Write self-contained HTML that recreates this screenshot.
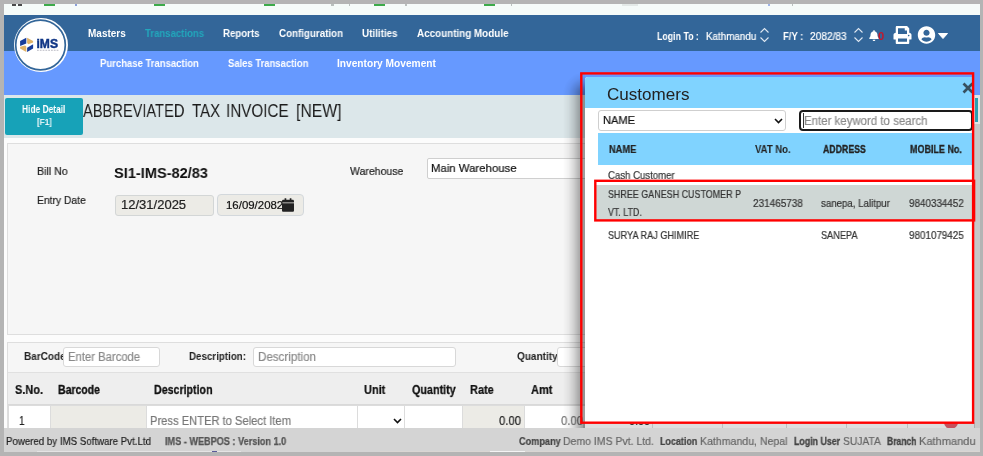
<!DOCTYPE html>
<html><head><meta charset="utf-8">
<style>
*{box-sizing:border-box;margin:0;padding:0}
html,body{width:983px;height:456px;overflow:hidden}
body{background:#b4b4b4;font-family:"Liberation Sans",sans-serif;position:relative;color:#222}
.a{position:absolute;white-space:nowrap}
.t{position:absolute;white-space:nowrap;line-height:1;transform-origin:0 0;will-change:transform}
svg{will-change:transform}
.cell{position:absolute;top:405px;height:24px;border:1px solid #dcdcdc;background:#fff}
</style></head><body>
<!-- page area -->
<div class="a" style="left:4px;top:4px;width:976px;height:448px;background:#fcfcfc"></div>
<!-- browser tab strip -->
<div class="a" style="left:4px;top:4px;width:976px;height:11px;background:#f5fbf9"></div>
<div class="a" style="left:44px;top:4px;width:11px;height:2px;background:#3cab4a"></div>
<div class="a" style="left:154px;top:4px;width:11px;height:2px;background:#3cab4a"></div>
<div class="a" style="left:264px;top:4px;width:11px;height:2px;background:#3cab4a"></div>
<div class="a" style="left:374px;top:4px;width:11px;height:2px;background:#3cab4a"></div>
<div class="a" style="left:484px;top:4px;width:11px;height:2px;background:#3cab4a"></div>
<div class="a" style="left:12px;top:4px;width:4px;height:2px;background:#4a4a4a"></div><div class="a" style="left:18px;top:4px;width:4px;height:2px;background:#4a4a4a"></div>
<div class="a" style="left:75px;top:4px;width:2px;height:2px;background:#8aa0d8"></div>
<div class="a" style="left:331px;top:4px;width:3px;height:2px;background:#b9bfbd"></div>
<div class="a" style="left:349px;top:4px;width:1px;height:2px;background:#b9bfbd"></div>
<div class="a" style="left:405px;top:4px;width:2px;height:2px;background:#b9bfbd"></div>
<div class="a" style="left:511px;top:4px;width:1px;height:2px;background:#b9bfbd"></div>
<div class="a" style="left:622px;top:4px;width:16px;height:2px;background:#e3e9e7"></div>
<div class="a" style="left:768px;top:4px;width:2px;height:2px;background:#9db4e6"></div>
<div class="a" style="left:792px;top:4px;width:1px;height:2px;background:#b9bfbd"></div>
<!-- nav bars -->
<div class="a" style="left:4px;top:15px;width:976px;height:36px;background:#336699"></div>
<div class="a" style="left:4px;top:51px;width:976px;height:44px;background:#6699ff"></div>
<!-- logo -->
<div class="a" style="left:13.5px;top:18px;width:54px;height:54px;border-radius:50%;background:#fff"></div>
<svg class="a" style="left:13px;top:17px" width="56" height="56" viewBox="0 0 56 56"><circle cx="27.5" cy="28" r="24.800" fill="none" stroke="#336699" stroke-width="1.700"/></svg>
<svg class="a" style="left:19px;top:36px" width="44" height="18" viewBox="0 0 44 18">
  <polygon points="1.1,5.1 7.3,1.700 7.3,7.4 1.1,10" fill="#173c9a"/>
  <polygon points="8.1,1.700 14.1,5.1 14.1,6.500 9.3,8.300 8.1,7.1" fill="#e0b266"/>
  <polygon points="8.1,11.700 14.1,8.300 14.1,12.500 8.1,16" fill="#173c9a"/>
  <polygon points="1.1,10.800 6.1,9.400 7.3,10.500 7.3,16 1.1,12.500" fill="#e0b266"/>
  <text x="17.500" y="11.700" font-family="Liberation Sans" font-weight="bold" font-size="12" fill="#0f3585" stroke="#0f3585" stroke-width="0.450" textLength="21.500" lengthAdjust="spacingAndGlyphs">iMS</text>
  <line x1="18" y1="14.300" x2="39.500" y2="14.300" stroke="#b9b9c2" stroke-width="1.100" stroke-dasharray="1.800 1"/>
</svg>
<!-- nav right icons -->
<svg class="a" style="left:759px;top:27px" width="11" height="16" viewBox="0 0 11 16"><path d="M1.5 5.5 L5.5 1.5 L9.5 5.5 M1.5 10.5 L5.5 14.5 L9.5 10.5" fill="none" stroke="#dfe8f2" stroke-width="1.1"/></svg>
<svg class="a" style="left:853px;top:27px" width="11" height="16" viewBox="0 0 11 16"><path d="M1.5 5.5 L5.5 1.5 L9.5 5.5 M1.5 10.5 L5.5 14.5 L9.5 10.5" fill="none" stroke="#dfe8f2" stroke-width="1.1"/></svg>
<svg class="a" style="left:869px;top:30px" width="10" height="11" viewBox="0 0 448 512"><path fill="#fff" d="M224 512c35.3 0 64-28.700 64-64H160c0 35.300 28.700 64 64 64zm215.400-149.700c-19.300-20.800-55.500-52-55.500-154.300 0-77.700-54.500-139.900-127.900-155.200V32c0-17.700-14.300-32-32-32s-32 14.300-32 32v20.800C118.600 68.100 64.100 130.300 64.100 208c0 102.300-36.200 133.500-55.500 154.300-6 6.400-8.700 14.100-8.600 21.700.1 16.400 13 32 32.100 32h383.800c19.100 0 32-15.600 32.100-32 .1-7.600-2.600-15.300-8.600-21.700z"/></svg>
<svg class="a" style="left:893px;top:26px" width="19" height="18" viewBox="0 0 512 512"><path fill="#fff" d="M448 192V77.250c0-8.490-3.370-16.620-9.370-22.630L393.370 9.370c-6-6-14.140-9.370-22.630-9.370H96C78.330 0 64 14.330 64 32v160c-35.350 0-64 28.650-64 64v112c0 8.840 7.160 16 16 16h48v96c0 17.670 14.330 32 32 32h320c17.670 0 32-14.330 32-32v-96h48c8.840 0 16-7.160 16-16V256c0-35.350-28.650-64-64-64zm-64 256H128v-96h256v96zm0-224H128V64h192v48c0 8.840 7.160 16 16 16h48v96zm48 72c-13.250 0-24-10.750-24-24 0-13.260 10.750-24 24-24s24 10.740 24 24c0 13.250-10.750 24-24 24z"/></svg>
<svg class="a" style="left:917px;top:26px" width="19" height="18" viewBox="0 0 496 512"><path fill="#fff" d="M248 8C111 8 0 119 0 256s111 248 248 248 248-111 248-248S385 8 248 8zm0 96c48.600 0 88 39.400 88 88s-39.400 88-88 88-88-39.400-88-88 39.400-88 88-88zm0 344c-58.700 0-111.300-26.600-146.500-68.200 18.800-35.400 55.600-59.800 98.500-59.800 2.400 0 4.800.4 7.100 1.100 13 4.200 26.600 6.900 40.900 6.900 14.300 0 28-2.700 40.900-6.900 2.300-.7 4.700-1.100 7.100-1.100 42.900 0 79.700 24.400 98.500 59.800C359.300 421.400 306.700 448 248 448z"/></svg>
<svg class="a" style="left:938px;top:33px" width="10" height="6" viewBox="0 0 10 6"><path d="M0.500 0.500 H9.500 L5 5.500 Z" fill="#fff" stroke="#fff" stroke-width="1" stroke-linejoin="round"/></svg>

<!-- title bar -->
<div class="a" style="left:4px;top:95px;width:976px;height:43px;background:#dce7ea"></div>
<div class="a" style="left:5px;top:98px;width:78px;height:37px;background:#17a2b8;border-radius:2px"></div>

<!-- panel 1 -->
<div class="a" style="left:7px;top:143px;width:980px;height:192px;background:#f6f6f6;border:1px solid #dedede"></div>
<div class="a" style="left:115px;top:195px;width:99px;height:21px;background:#ecebe6;border:1px solid #d3d6d6;border-radius:3px"></div>
<div class="a" style="left:217px;top:194px;width:87px;height:22px;background:#ecebe6;border:1px solid #d3d8dc;border-radius:4px"></div>
<svg class="a" style="left:282px;top:198px;z-index:2" width="12" height="14" viewBox="0 0 448 512"><path fill="#222" d="M12 192h424c6.600 0 12 5.400 12 12v260c0 26.500-21.500 48-48 48H48c-26.500 0-48-21.500-48-48V204c0-6.600 5.400-12 12-12zm436-44v-36c0-26.500-21.500-48-48-48h-48V12c0-6.600-5.400-12-12-12h-40c-6.600 0-12 5.400-12 12v52H160V12c0-6.600-5.400-12-12-12h-40c-6.600 0-12 5.400-12 12v52H48C21.500 64 0 85.500 0 112v36c0 6.600 5.400 12 12 12h424c6.600 0 12-5.400 12-12z"/></svg>
<div class="a" style="left:427px;top:158px;width:300px;height:21px;background:#fff;border:1px solid #cfcfcf;border-radius:2px"></div>

<!-- panel 2 -->
<div class="a" style="left:7px;top:342px;width:980px;height:120px;background:#f6f6f6;border:1px solid #dedede"></div>
<div class="a" style="left:63px;top:347px;width:97px;height:20px;background:#fff;border:1px solid #d8d8d8;border-radius:3px;z-index:2"></div>
<div class="a" style="left:253px;top:347px;width:203px;height:20px;background:#fff;border:1px solid #d8d8d8;border-radius:3px"></div>
<div class="a" style="left:557px;top:347px;width:97px;height:20px;background:#fff;border:1px solid #d8d8d8;border-radius:3px;z-index:2"></div>
<!-- table header -->
<div class="a" style="left:8px;top:372px;width:972px;height:33px;background:#eeeeee;border-top:1px solid #e0e0e0;border-bottom:1px solid #d9d9d9"></div>
<!-- row 1 -->
<div class="cell" style="left:8px;width:43px"></div>
<div class="cell" style="left:50px;width:97px;background:#ecebe6"></div>
<div class="cell" style="left:146px;width:212px"></div>
<div class="cell" style="left:357px;width:48px"></div>
<div class="cell" style="left:404px;width:59px"></div>
<div class="cell" style="left:462px;width:63px;background:#ecebe6"></div>
<div class="cell" style="left:524px;width:129px"></div>
<div class="cell" style="left:652px;width:71px"></div>
<div class="cell" style="left:722px;width:65px"></div>
<div class="cell" style="left:786px;width:61px"></div>
<div class="cell" style="left:846px;width:62px"></div>
<div class="cell" style="left:907px;width:40px"></div>
<svg class="a" style="left:393px;top:418px" width="9" height="6" viewBox="0 0 9 6"><path d="M1 1 L4.500 4.500 L8 1" fill="none" stroke="#111" stroke-width="1.600"/></svg>
<div class="a" style="left:944px;top:415px;width:14px;height:14px;border-radius:50%;background:#e35d6a"></div>

<!-- footer -->
<div class="a" style="left:4px;top:428px;width:976px;height:24px;background:#d4d4d4;z-index:11"></div>

<!-- popup shadow -->
<div class="a" style="left:563px;top:94px;width:22px;height:334px;background:linear-gradient(to right,rgba(0,0,0,0) 0%,rgba(0,0,0,0.05) 25%,rgba(0,0,0,0.16) 50%,rgba(0,0,0,0.29) 72%,rgba(0,0,0,0.36) 88%,rgba(0,0,0,0.38) 100%);z-index:4"></div><div class="a" style="left:563px;top:72px;width:22px;height:22px;background:radial-gradient(circle at 100% 100%,rgba(0,0,0,0.38) 0px,rgba(0,0,0,0.36) 2.6px,rgba(0,0,0,0.29) 6.2px,rgba(0,0,0,0.16) 11px,rgba(0,0,0,0.05) 16.5px,rgba(0,0,0,0) 22px);z-index:4"></div>
<div class="a" style="left:974px;top:95px;width:6px;height:29px;background:#e2e6e6;z-index:4"></div><div class="a" style="left:974px;top:124px;width:6px;height:304px;background:#c7c8c8;z-index:4"></div>
<div class="a" style="left:975px;top:98px;width:3px;height:24px;background:#2a9fb0;z-index:4"></div>
<div class="a" style="left:583px;top:422px;width:392px;height:6px;background:rgba(0,0,0,0.13);z-index:4"></div>
<!-- popup -->
<div class="a" style="left:584.5px;top:76.7px;width:389px;height:345.5px;background:#fff;border-radius:3px 0 0 0;overflow:hidden;z-index:7">
  <div class="a" style="left:0;top:0;width:389px;height:31px;background:#80d3ff"></div>
</div>
<svg class="a" style="left:962px;top:82px;z-index:8" width="12" height="12" viewBox="0 0 12 12"><path d="M1.5 1.5 L10.5 10.5 M10.5 1.5 L1.5 10.500" stroke="#37505f" stroke-width="2.700" fill="none"/></svg>
<div class="a" style="left:598px;top:110px;width:188px;height:21px;background:#fff;border:1px solid #cfcfcf;border-radius:3px;z-index:7"></div>
<svg class="a" style="left:774px;top:118px;z-index:8" width="9" height="6" viewBox="0 0 9 6"><path d="M1 1 L4.500 4.500 L8 1" fill="none" stroke="#111" stroke-width="1.600"/></svg>
<div class="a" style="left:799px;top:110px;width:174px;height:21px;background:#fff;border:2px solid #1a1a1a;border-radius:4px;z-index:7"></div>
<div class="a" style="left:803px;top:113px;width:1px;height:15px;background:#333;z-index:8"></div>
<div class="a" style="left:598px;top:133px;width:375px;height:32px;background:#80d3ff;z-index:7"></div>
<div class="a" style="left:596px;top:185px;width:377px;height:34.5px;background:#cfd7d5;z-index:7"></div>
<div class="a" style="left:37px;top:451px;width:204px;height:1px;background:#e4e4e4;z-index:12"></div>
<div class="a" style="left:212px;top:451px;width:5px;height:1px;background:#5a5a9a;z-index:12"></div>
<div class="a" style="left:380px;top:451px;width:600px;height:1px;background:#dad6d3;z-index:12"></div>
<div class="a" style="left:490px;top:451px;width:35px;height:1px;background:#f4f4f4;z-index:12"></div>
<div class="t" style="left:87.6px;top:29.15px;font-size:10.0px;font-weight:bold;color:#fff;transform:scaleX(0.9970);">Masters</div>
<div class="t" style="left:144.9px;top:29.15px;font-size:10.0px;font-weight:bold;color:#22a8bc;transform:scaleX(0.9562);">Transactions</div>
<div class="t" style="left:223.2px;top:29.15px;font-size:10.0px;font-weight:bold;color:#fff;transform:scaleX(0.9630);">Reports</div>
<div class="t" style="left:278.5px;top:29.15px;font-size:10.0px;font-weight:bold;color:#fff;transform:scaleX(0.9764);">Configuration</div>
<div class="t" style="left:361.8px;top:29.15px;font-size:10.0px;font-weight:bold;color:#fff;transform:scaleX(0.9827);">Utilities</div>
<div class="t" style="left:416.6px;top:29.15px;font-size:10.0px;font-weight:bold;color:#fff;transform:scaleX(0.9862);">Accounting Module</div>
<div class="t" style="left:99.6px;top:59.15px;font-size:10.0px;font-weight:bold;color:#fff;transform:scaleX(0.9515);">Purchase Transaction</div>
<div class="t" style="left:227.5px;top:59.15px;font-size:10.0px;font-weight:bold;color:#fff;transform:scaleX(0.9454);">Sales Transaction</div>
<div class="t" style="left:337.0px;top:59.15px;font-size:10.0px;font-weight:bold;color:#fff;transform:scaleX(1.0170);">Inventory Movement</div>
<div class="t" style="left:656.7px;top:32.15px;font-size:10.3px;font-weight:bold;color:#fff;transform:scaleX(0.8551);">Login To :</div>
<div class="t" style="left:705.6px;top:32.15px;font-size:10.3px;font-weight:normal;color:#fff;transform:scaleX(0.9531);;-webkit-text-stroke:0.2px #fff">Kathmandu</div>
<div class="t" style="left:783.0px;top:32.15px;font-size:10.3px;font-weight:bold;color:#fff;transform:scaleX(0.9175);">F/Y :</div>
<div class="t" style="left:810.0px;top:32.15px;font-size:10.3px;font-weight:normal;color:#fff;transform:scaleX(0.9830);;-webkit-text-stroke:0.2px #fff">2082/83</div>
<div class="t" style="left:878.0px;top:31.15px;font-size:10.8px;font-weight:bold;color:#c4162a;transform:scaleX(1.0306);">0</div>
<div class="t" style="left:22.4px;top:105.15px;font-size:10.4px;font-weight:bold;color:#fff;transform:scaleX(0.8063);">Hide Detail</div>
<div class="t" style="left:36.6px;top:117.15px;font-size:9.6px;font-weight:normal;color:#fff;transform:scaleX(0.9013);;-webkit-text-stroke:0.2px #fff">[F1]</div>
<div class="t" style="left:83.4px;top:102.15px;font-size:18.6px;font-weight:normal;color:#1c1c1c;transform:scaleX(0.7872);">ABBREVIATED</div>
<div class="t" style="left:191.6px;top:102.15px;font-size:18.6px;font-weight:normal;color:#1c1c1c;transform:scaleX(0.8050);">TAX</div>
<div class="t" style="left:226.1px;top:102.15px;font-size:18.6px;font-weight:normal;color:#1c1c1c;transform:scaleX(0.8199);">INVOICE</div>
<div class="t" style="left:295.6px;top:102.15px;font-size:18.6px;font-weight:normal;color:#1c1c1c;transform:scaleX(0.8489);">[NEW]</div>
<div class="t" style="left:37.2px;top:166.15px;font-size:11.5px;font-weight:normal;color:#222;transform:scaleX(0.9268);;-webkit-text-stroke:0.2px #222">Bill No</div>
<div class="t" style="left:114.4px;top:165.15px;font-size:15px;font-weight:bold;color:#111;transform:scaleX(0.9719);">SI1-IMS-82/83</div>
<div class="t" style="left:37.2px;top:195.15px;font-size:11.5px;font-weight:normal;color:#222;transform:scaleX(0.8982);;-webkit-text-stroke:0.2px #222">Entry Date</div>
<div class="t" style="left:120.5px;top:199.15px;font-size:12px;font-weight:normal;color:#222;transform:scaleX(1.0839);;-webkit-text-stroke:0.2px #222">12/31/2025</div>
<div class="t" style="left:226.2px;top:200.15px;font-size:11.3px;font-weight:normal;color:#111;transform:scaleX(1.0116);;-webkit-text-stroke:0.2px #111">16/09/2082</div>
<div class="t" style="left:350.0px;top:166.15px;font-size:11.5px;font-weight:normal;color:#222;transform:scaleX(0.9145);;-webkit-text-stroke:0.2px #222">Warehouse</div>
<div class="t" style="left:431.4px;top:163.15px;font-size:11.8px;font-weight:normal;color:#111;transform:scaleX(0.9645);;-webkit-text-stroke:0.2px #111">Main Warehouse</div>
<div class="t" style="left:23.8px;top:351.15px;font-size:10.5px;font-weight:bold;color:#222;transform:scaleX(0.9528);z-index:1">BarCode</div>
<div class="t" style="left:67.7px;top:351.15px;font-size:12px;font-weight:normal;color:#8a8a8a;transform:scaleX(0.9398);z-index:3;-webkit-text-stroke:0.2px #8a8a8a">Enter Barcode</div>
<div class="t" style="left:188.6px;top:351.15px;font-size:10.5px;font-weight:bold;color:#222;transform:scaleX(0.9304);">Description:</div>
<div class="t" style="left:258.4px;top:351.15px;font-size:12px;font-weight:normal;color:#8a8a8a;transform:scaleX(0.9662);;-webkit-text-stroke:0.2px #8a8a8a">Description</div>
<div class="t" style="left:517.3px;top:351.15px;font-size:10.5px;font-weight:bold;color:#222;transform:scaleX(0.9555);z-index:1">Quantity</div>
<div class="t" style="left:14.6px;top:384.15px;font-size:12.3px;font-weight:bold;color:#111;transform:scaleX(0.8938);;-webkit-text-stroke:0.23px #111">S.No.</div>
<div class="t" style="left:58.0px;top:384.15px;font-size:12.3px;font-weight:bold;color:#111;transform:scaleX(0.8533);;-webkit-text-stroke:0.32px #111">Barcode</div>
<div class="t" style="left:153.5px;top:384.15px;font-size:12.3px;font-weight:bold;color:#111;transform:scaleX(0.8647);;-webkit-text-stroke:0.30px #111">Description</div>
<div class="t" style="left:364.2px;top:384.15px;font-size:12.3px;font-weight:bold;color:#111;transform:scaleX(0.8910);;-webkit-text-stroke:0.24px #111">Unit</div>
<div class="t" style="left:412.0px;top:384.15px;font-size:12.3px;font-weight:bold;color:#111;transform:scaleX(0.8762);;-webkit-text-stroke:0.27px #111">Quantity</div>
<div class="t" style="left:470.0px;top:384.15px;font-size:12.3px;font-weight:bold;color:#111;transform:scaleX(0.8928);;-webkit-text-stroke:0.24px #111">Rate</div>
<div class="t" style="left:531.0px;top:384.15px;font-size:12.3px;font-weight:bold;color:#111;transform:scaleX(0.8946);;-webkit-text-stroke:0.23px #111">Amt</div>
<div class="t" style="left:18.9px;top:415.15px;font-size:12.6px;font-weight:normal;color:#222;transform:scaleX(0.7982);;-webkit-text-stroke:0.2px #222">1</div>
<div class="t" style="left:150.4px;top:415.15px;font-size:12.6px;font-weight:normal;color:#777;transform:scaleX(0.8875);;-webkit-text-stroke:0.2px #777">Press ENTER to Select Item</div>
<div class="t" style="left:499.3px;top:415.15px;font-size:12.6px;font-weight:normal;color:#222;transform:scaleX(0.8974);;-webkit-text-stroke:0.2px #222">0.00</div>
<div class="t" style="left:561.0px;top:415.15px;font-size:12.6px;font-weight:normal;color:#777;transform:scaleX(0.8974);;-webkit-text-stroke:0.2px #777">0.00</div>
<div class="t" style="left:629.0px;top:415.15px;font-size:12.6px;font-weight:normal;color:#222;transform:scaleX(0.8566);;-webkit-text-stroke:0.2px #222">0.00</div>
<div class="t" style="left:5.5px;top:436.15px;font-size:10.8px;font-weight:normal;color:#222;transform:scaleX(0.8976);z-index:12;-webkit-text-stroke:0.2px #222">Powered by IMS Software Pvt.Ltd</div>
<div class="t" style="left:164.8px;top:437.15px;font-size:10.3px;font-weight:bold;color:#555;transform:scaleX(0.8862);z-index:12;-webkit-text-stroke:0.25px #555">IMS - WEBPOS : Version 1.0</div>
<div class="t" style="left:518.7px;top:437.15px;font-size:10px;font-weight:bold;color:#444;transform:scaleX(0.9152);z-index:12;-webkit-text-stroke:0.19px #444">Company</div>
<div class="t" style="left:562.9px;top:436.15px;font-size:11.5px;font-weight:normal;color:#666;transform:scaleX(0.9117);z-index:12;-webkit-text-stroke:0.2px #666">Demo IMS Pvt. Ltd.</div>
<div class="t" style="left:660.2px;top:437.15px;font-size:10px;font-weight:bold;color:#444;transform:scaleX(0.8951);z-index:12;-webkit-text-stroke:0.23px #444">Location</div>
<div class="t" style="left:700.0px;top:436.15px;font-size:11.5px;font-weight:normal;color:#666;transform:scaleX(0.9185);z-index:12;-webkit-text-stroke:0.2px #666">Kathmandu, Nepal</div>
<div class="t" style="left:793.9px;top:437.15px;font-size:10px;font-weight:bold;color:#444;transform:scaleX(0.8826);z-index:12;-webkit-text-stroke:0.26px #444">Login User</div>
<div class="t" style="left:843.0px;top:436.15px;font-size:11.5px;font-weight:normal;color:#666;transform:scaleX(0.8917);z-index:12;-webkit-text-stroke:0.2px #666">SUJATA</div>
<div class="t" style="left:887.2px;top:437.15px;font-size:10px;font-weight:bold;color:#444;transform:scaleX(0.8562);z-index:12;-webkit-text-stroke:0.32px #444">Branch</div>
<div class="t" style="left:919.2px;top:436.15px;font-size:11.5px;font-weight:normal;color:#666;transform:scaleX(0.9604);z-index:12;-webkit-text-stroke:0.2px #666">Kathmandu</div>
<div class="t" style="left:607.4px;top:86.15px;font-size:17px;font-weight:normal;color:#222;transform:scaleX(1.0038);z-index:8">Customers</div>
<div class="t" style="left:602.6px;top:115.15px;font-size:11.5px;font-weight:normal;color:#111;transform:scaleX(0.9659);z-index:8;-webkit-text-stroke:0.2px #111">NAME</div>
<div class="t" style="left:803.8px;top:115.15px;font-size:12px;font-weight:normal;color:#8a8a8a;transform:scaleX(0.9544);z-index:8;-webkit-text-stroke:0.2px #8a8a8a">Enter keyword to search</div>
<div class="t" style="left:609.0px;top:145.15px;font-size:10.2px;font-weight:bold;color:#222;transform:scaleX(0.9100);z-index:8;-webkit-text-stroke:0.20px #222">NAME</div>
<div class="t" style="left:755.0px;top:145.15px;font-size:10.2px;font-weight:bold;color:#222;transform:scaleX(0.9342);z-index:8">VAT No.</div>
<div class="t" style="left:823.0px;top:145.15px;font-size:10.2px;font-weight:bold;color:#222;transform:scaleX(0.8590);z-index:8;-webkit-text-stroke:0.31px #222">ADDRESS</div>
<div class="t" style="left:910.4px;top:145.15px;font-size:10.2px;font-weight:bold;color:#222;transform:scaleX(0.8818);z-index:8;-webkit-text-stroke:0.26px #222">MOBILE No.</div>
<div class="t" style="left:607.9px;top:171.15px;font-size:10.3px;font-weight:normal;color:#333;transform:scaleX(0.9325);z-index:8;-webkit-text-stroke:0.2px #333">Cash Customer</div>
<div class="t" style="left:607.9px;top:190.15px;font-size:10.3px;font-weight:normal;color:#333;transform:scaleX(0.8690);z-index:8;-webkit-text-stroke:0.2px #333">SHREE GANESH CUSTOMER P</div>
<div class="t" style="left:607.9px;top:208.15px;font-size:10.3px;font-weight:normal;color:#333;transform:scaleX(0.8601);z-index:8;-webkit-text-stroke:0.2px #333">VT. LTD.</div>
<div class="t" style="left:753.4px;top:199.15px;font-size:10.3px;font-weight:normal;color:#333;transform:scaleX(0.9681);z-index:8;-webkit-text-stroke:0.2px #333">231465738</div>
<div class="t" style="left:821.2px;top:199.15px;font-size:10.3px;font-weight:normal;color:#333;transform:scaleX(0.9402);z-index:8;-webkit-text-stroke:0.2px #333">sanepa, Lalitpur</div>
<div class="t" style="left:908.5px;top:199.15px;font-size:10.3px;font-weight:normal;color:#333;transform:scaleX(0.9567);z-index:8;-webkit-text-stroke:0.2px #333">9840334452</div>
<div class="t" style="left:607.9px;top:231.15px;font-size:10.3px;font-weight:normal;color:#333;transform:scaleX(0.8848);z-index:8;-webkit-text-stroke:0.2px #333">SURYA RAJ GHIMIRE</div>
<div class="t" style="left:821.2px;top:231.15px;font-size:10.3px;font-weight:normal;color:#333;transform:scaleX(0.8899);z-index:8;-webkit-text-stroke:0.2px #333">SANEPA</div>
<div class="t" style="left:908.5px;top:231.15px;font-size:10.3px;font-weight:normal;color:#333;transform:scaleX(0.9567);z-index:8;-webkit-text-stroke:0.2px #333">9801079425</div>
<!-- red annotation boxes -->
<svg class="a" style="left:0;top:0;z-index:9" width="983" height="456" viewBox="0 0 983 456">
  <rect x="581.3" y="73.4" width="391.8" height="349.3" fill="none" stroke="#ff0000" stroke-width="2.4"/>
  <rect x="595.3" y="180.8" width="378.8" height="39.6" fill="none" stroke="#ff0000" stroke-width="2.4"/>
</svg>
<!-- outer grey frame on top -->
<div class="a" style="left:0;top:0;width:983px;height:4px;background:#b4b4b4;z-index:13"></div>
<div class="a" style="left:0;top:452px;width:983px;height:4px;background:#b4b4b4;z-index:13"></div>
<div class="a" style="left:0;top:0;width:4px;height:456px;background:#b4b4b4;z-index:13"></div>
<div class="a" style="left:980px;top:0;width:3px;height:456px;background:#b4b4b4;z-index:13"></div>
</body></html>
